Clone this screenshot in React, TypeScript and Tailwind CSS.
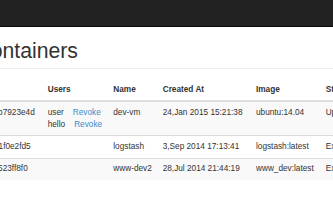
import React from "react";

type Row = { id: string; users: string[]; name: string; created: string; image: string; status: string };

const rows: Row[] = [
  { id: "3a7cb7923e4d", users: ["user", "hello"], name: "dev-vm", created: "24,Jan 2015 15:21:38", image: "ubuntu:14.04", status: "Up 2 hours" },
  { id: "9d2e1f0e2fd5", users: [], name: "logstash", created: "3,Sep 2014 17:13:41", image: "logstash:latest", status: "Exited (0)" },
  { id: "c04a523ff8f0", users: [], name: "www-dev2", created: "28,Jul 2014 21:44:19", image: "www_dev:latest", status: "Exited (0)" },
];

export default function App() {
  const th = "px-[4.7px] pt-[4.7px] pb-[4.7px] text-left align-bottom font-bold border-b-2 border-[#ddd]";
  const td = "px-[4.7px] py-[4.7px] align-top border-t border-[#ddd] whitespace-nowrap";
  return (
    <div
      className="w-[333px] h-[222px] overflow-hidden bg-white text-[#333] text-[8.26px] leading-[11.8px]"
      style={{ fontFamily: '"Liberation Sans", Arial, Helvetica, sans-serif' }}
    >
      <div className="h-[27px] bg-[#222] border-b border-[#080808]" />
      <div className="-ml-[24.5px] w-[560px]">
        <div className="mt-[12px] pb-[5.3px] border-b border-[#eee]">
          <h1 className="text-[21.2px] leading-[23.4px] font-normal m-0">Containers</h1>
        </div>
        <table className="mt-[10.5px] table-fixed border-collapse w-[545px]">
          <colgroup>
            <col className="w-[67.5px]" />
            <col className="w-[65.6px]" />
            <col className="w-[49.4px]" />
            <col className="w-[93.3px]" />
            <col className="w-[69.7px]" />
            <col />
          </colgroup>
          <thead>
            <tr>
              <th className={th}>ID</th>
              <th className={th}>Users</th>
              <th className={th}>Name</th>
              <th className={th}>Created At</th>
              <th className={th}>Image</th>
              <th className={th}>Status</th>
            </tr>
          </thead>
          <tbody>
            {rows.map((r, i) => (
              <tr key={r.id} className={i % 2 === 0 ? "bg-[#f9f9f9]" : "bg-white"}>
                <td className={td}>{r.id}</td>
                <td className={td}>
                  {r.users.map((u) => (
                    <div key={u}>
                      {u}
                      <a className="ml-[9px] text-[#428bca]">Revoke</a>
                    </div>
                  ))}
                </td>
                <td className={td}>{r.name}</td>
                <td className={td}>{r.created}</td>
                <td className={td}>{r.image}</td>
                <td className={td}>{r.status}</td>
              </tr>
            ))}
          </tbody>
        </table>
      </div>
    </div>
  );
}
